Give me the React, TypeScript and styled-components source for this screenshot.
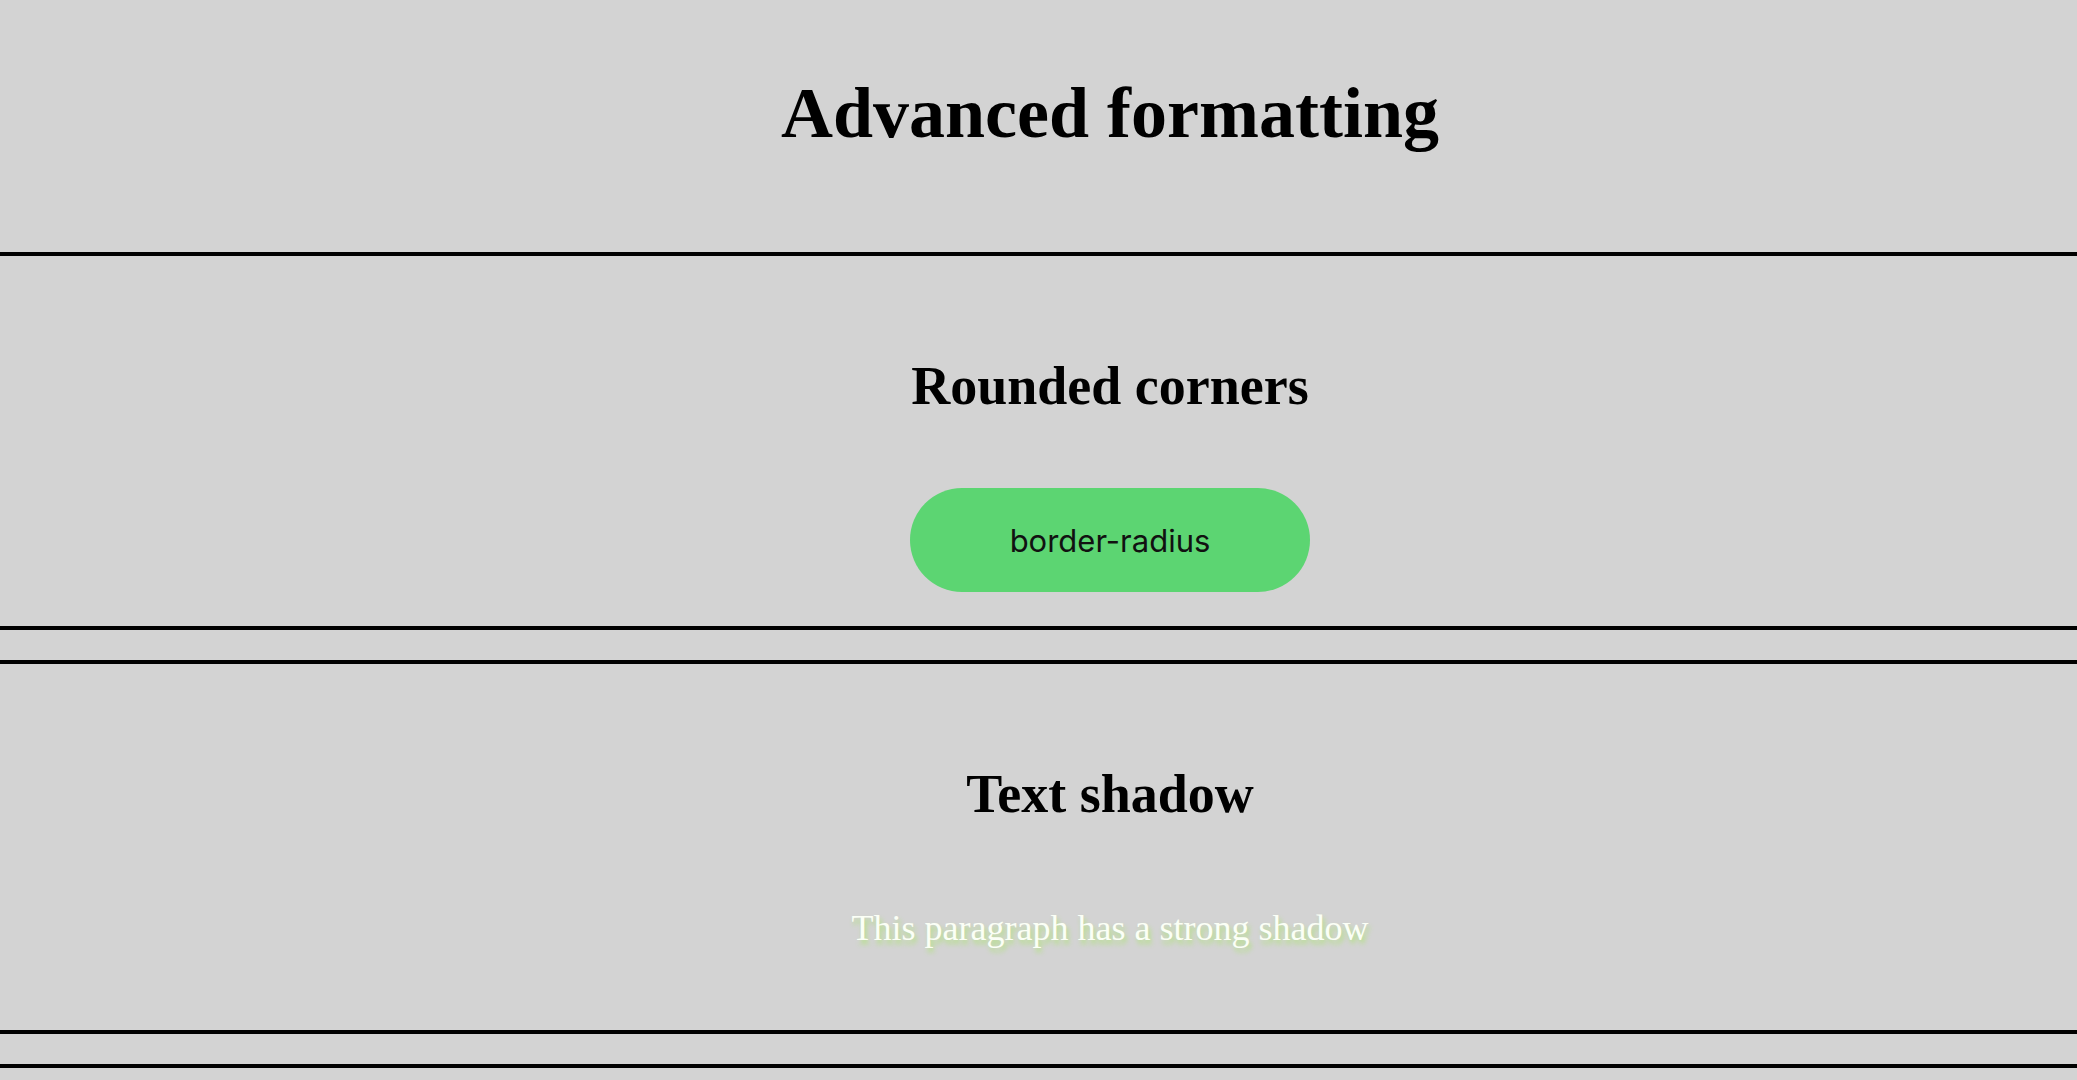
import React from 'react'
import styled, { createGlobalStyle } from 'styled-components'

const GlobalStyle = createGlobalStyle`
    html, body {
        margin: 0;
        padding: 0;
        background: #d3d3d3;
    }
    body {
        font-family: "Liberation Serif", "Times New Roman", serif;
        color: #000;
    }
`

// content is centred a bit right of the viewport middle in the reference
const OFFSET = 143

const Header = styled.header`
    box-sizing: border-box;
    height: 252px;
    padding: 72px 0 0 ${OFFSET}px;
    text-align: center;
`

const Title = styled.h1`
    margin: 0;
    font-size: 72px;
    font-weight: 700;
    line-height: normal;
`

const Section = styled.section<{ $top: number; $bottom: number }>`
    border-top: 4px solid #000;
    border-bottom: 4px solid #000;
    margin-bottom: 30px;
    padding: ${p => p.$top}px 0 ${p => p.$bottom}px ${OFFSET}px;
    text-align: center;
`

const Heading = styled.h2`
    margin: 0;
    font-size: 54px;
    font-weight: 700;
    line-height: normal;
`

const Pill = styled.div`
    display: flex;
    align-items: center;
    justify-content: center;
    width: 400px;
    height: 104px;
    margin: 71px auto 0;
    border-radius: 52px;
    background: #5cd572;
    color: #111;
    font-family: Inter, "Liberation Sans", sans-serif;
    font-size: 31px;
`

const ShadowText = styled.p`
    margin: 82px 0 0;
    font-size: 36px;
    line-height: normal;
    color: #fbfff6;
    text-shadow: 2px 4px 5px rgb(178, 226, 128);
`

export default function App() {
    return (
        <>
            <GlobalStyle />
            <Header>
                <Title>Advanced formatting</Title>
            </Header>
            <Section $top={99} $bottom={34}>
                <Heading>Rounded corners</Heading>
                <Pill>border-radius</Pill>
            </Section>
            <Section $top={99} $bottom={81}>
                <Heading>Text shadow</Heading>
                <ShadowText>This paragraph has a strong shadow</ShadowText>
            </Section>
            <Section $top={99} $bottom={99} />
        </>
    )
}
